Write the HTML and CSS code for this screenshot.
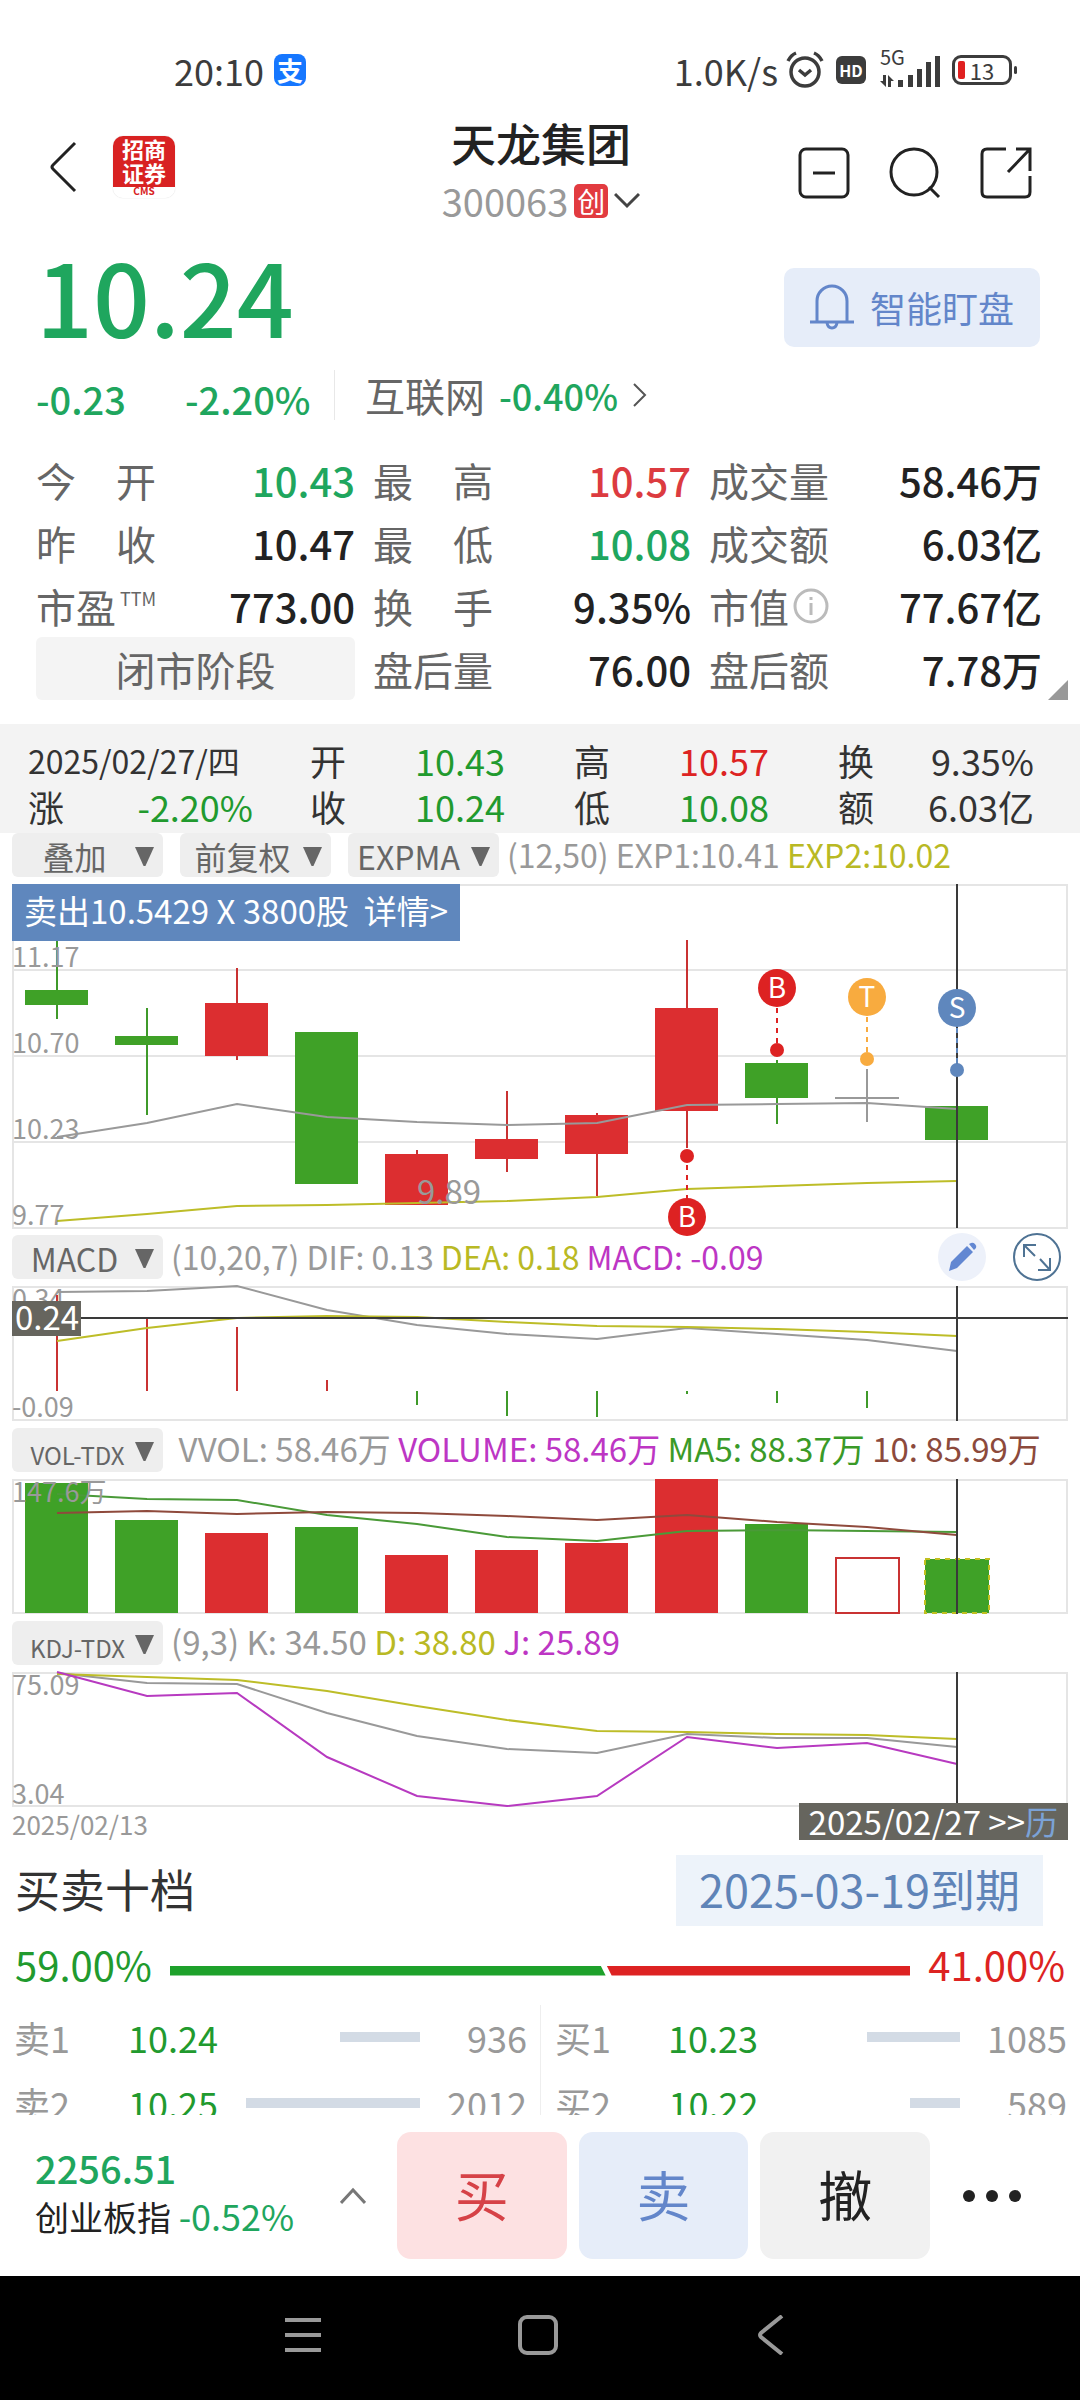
FILE: index.html
```html
<!DOCTYPE html>
<html lang="zh-CN">
<head>
    <meta charset="UTF-8">
    <meta name="viewport" content="width=device-width, initial-scale=1.0">
    <title>天龙集团 300063</title>
    <link rel="stylesheet" href="styles.css">
</head>
<body>
    <div class="app">
        <div class="status-bar">
            <div class="status-left">
                <span>20:10</span>
                <span class="pay-icon">支</span>
            </div>
            <div class="status-right">
                <span>1.0K/s</span>
                <svg width="38" height="38" viewBox="0 0 38 38" fill="none" stroke="#3c3c3c" stroke-width="3.5">
                    <circle cx="19" cy="21" r="14"/>
                    <path d="M13 19l6 5 6-5M2 10q3-6 8-8M36 10q-3-6-8-8"/>
                </svg>
                <span class="hd-icon">HD</span>
                <span class="signal">
                    <span class="net">5G</span>
                    <svg width="60" height="34" viewBox="0 0 60 34" fill="#3c3c3c">
                        <path d="M3 22h3v12L0 28h3zM8 34V22l6 6h-3v6z"/>
                        <rect x="18" y="27" width="5" height="7"/>
                        <rect x="28" y="22" width="5" height="12"/>
                        <rect x="37" y="16" width="5" height="18"/>
                        <rect x="46" y="9" width="5" height="25"/>
                        <rect x="55" y="3" width="5" height="31"/>
                    </svg>
                </span>
                <span class="battery">13</span>
            </div>
        </div>

        <header class="header">
            <div class="header-side header-home">
                <button class="icon-btn" aria-label="返回">
                    <svg width="28" height="52" viewBox="0 0 28 52" fill="none" stroke="#222" stroke-width="3">
                        <path d="M25 2L3 24q-2 2 0 4l22 22"/>
                    </svg>
                </button>
                <div class="logo">
                    <span>招商</span>
                    <span>证券</span>
                    <small>CMS</small>
                </div>
            </div>
            <div class="header-title">
                <h1>天龙集团</h1>
                <button class="code">300063<span class="board">创</span>
                    <svg width="26" height="18" viewBox="0 0 26 18" fill="none" stroke="#444" stroke-width="3">
                        <path d="M1 2l12 12L25 2"/>
                    </svg>
                </button>
            </div>
            <div class="header-side header-actions">
                <button class="icon-btn" aria-label="移除自选">
                    <svg width="52" height="52" viewBox="0 0 52 52" fill="none" stroke="#222" stroke-width="3">
                        <rect x="2" y="2" width="48" height="48" rx="6"/>
                        <path d="M15 26h22"/>
                    </svg>
                </button>
                <button class="icon-btn" aria-label="搜索">
                    <svg width="52" height="52" viewBox="0 0 52 52" fill="none" stroke="#222" stroke-width="3">
                        <circle cx="25" cy="25" r="23"/>
                        <path d="M40 40l10 10"/>
                    </svg>
                </button>
                <button class="icon-btn" aria-label="分享">
                    <svg width="52" height="52" viewBox="0 0 52 52" fill="none" stroke="#222" stroke-width="3">
                        <path d="M26 2H7Q2 2 2 7v38q0 5 5 5h38q5 0 5-5V29M36 2h14v22M50 2L28 25"/>
                    </svg>
                </button>
            </div>
        </header>

        <main class="content">
            <section class="price-row">
                <strong class="price green">10.24</strong>
                <button class="watch-btn">
                    <svg width="44" height="46" viewBox="0 0 44 46" fill="none" stroke="#6386ca" stroke-width="3">
                        <path d="M7 38V17a15 15 0 0 1 30 0v21M0 38h44M17 39q1 5 5 5t5-5"/>
                    </svg>
                    智能盯盘
                </button>
            </section>

            <section class="change-row">
                <span class="change green">-0.23</span>
                <span class="change-rate green">-2.20%</span>
                <a class="sector" href="#">互联网 <b class="green">-0.40%</b>
                    <svg width="16" height="24" viewBox="0 0 16 24" fill="none" stroke="#555" stroke-width="2">
                        <path d="M2 1l11 11L2 23"/>
                    </svg>
                </a>
            </section>

            <section class="quote">
                <dl>
                    <div><dt class="spread"><i>今</i><i>开</i></dt><dd class="green">10.43</dd></div>
                    <div><dt class="spread"><i>昨</i><i>收</i></dt><dd>10.47</dd></div>
                    <div><dt>市盈<sup>TTM</sup></dt><dd>773.00</dd></div>
                    <div class="phase">闭市阶段</div>
                </dl>
                <dl>
                    <div><dt class="spread"><i>最</i><i>高</i></dt><dd class="red">10.57</dd></div>
                    <div><dt class="spread"><i>最</i><i>低</i></dt><dd class="green">10.08</dd></div>
                    <div><dt class="spread"><i>换</i><i>手</i></dt><dd>9.35%</dd></div>
                    <div><dt>盘后量</dt><dd>76.00</dd></div>
                </dl>
                <dl>
                    <div><dt>成交量</dt><dd>58.46万</dd></div>
                    <div><dt>成交额</dt><dd>6.03亿</dd></div>
                    <div><dt>市值
                        <svg width="36" height="36" viewBox="0 0 36 36" fill="none" stroke="#bbb" stroke-width="3">
                            <circle cx="18" cy="18" r="16"/>
                            <path d="M18 15v12M18 9v3"/>
                        </svg></dt><dd>77.67亿</dd></div>
                    <div><dt>盘后额</dt><dd>7.78万</dd></div>
                </dl>
                <span class="corner"></span>
            </section>

            <section class="day-bar">
                <dl>
                    <div><dt class="date">2025/02/27/四</dt></div>
                    <div><dt>涨</dt><dd class="dgreen">-2.20%</dd></div>
                </dl>
                <dl>
                    <div><dt>开</dt><dd class="dgreen">10.43</dd></div>
                    <div><dt>收</dt><dd class="dgreen">10.24</dd></div>
                </dl>
                <dl>
                    <div><dt>高</dt><dd class="dred">10.57</dd></div>
                    <div><dt>低</dt><dd class="dgreen">10.08</dd></div>
                </dl>
                <dl>
                    <div><dt>换</dt><dd>9.35%</dd></div>
                    <div><dt>额</dt><dd>6.03亿</dd></div>
                </dl>
            </section>

            <section class="charts">
                <div class="tools">
                    <label class="pick"><select aria-label="叠加"><option>叠加</option></select></label>
                    <label class="pick"><select aria-label="复权"><option>前复权</option></select></label>
                    <label class="pick tight"><select aria-label="主图指标"><option>EXPMA</option></select></label>
                    <p class="legend">(12,50) EXP1:10.41 <span class="yellow">EXP2:10.02</span></p>
                </div>
                <div class="chart">
                    <svg viewBox="0 0 1056 344">
                        <path class="grid" d="M0 1H1055V344H1V0M0 86H1056M0 172H1056M0 258H1056"/>
                        <g class="up">
                            <path d="M225 84V176M405 266V321M495 207V288M585 229V312M675 56V264"/>
                            <rect x="193" y="119" width="63" height="53"/>
                            <rect x="373" y="270" width="63" height="51"/>
                            <rect x="463" y="255" width="63" height="20"/>
                            <rect x="553" y="231" width="63" height="39"/>
                            <rect x="643" y="124" width="63" height="103"/>
                        </g>
                        <g class="down">
                            <path d="M45 56V135M135 124V231M765 176V240M945 196V286"/>
                            <rect x="13" y="106" width="63" height="15"/>
                            <rect x="103" y="152" width="63" height="9"/>
                            <rect x="283" y="148" width="63" height="152"/>
                            <rect x="733" y="179" width="63" height="35"/>
                            <rect x="913" y="222" width="63" height="34"/>
                        </g>
                        <path class="flat" d="M855 185V238M823 214H887"/>
                        <polyline class="line-gray" points="45,253 135,239 225,220 315,233 405,238 495,241 585,239 675,221 765,220 855,219 945,225"/>
                        <polyline class="line-yellow" points="45,337 135,330 225,322 315,321 405,319 495,317 585,313 675,305 765,302 855,299 945,297"/>
                        <path class="cross" d="M945 0V344"/>
                        <g class="axis">
                            <text x="0" y="83">11.17</text>
                            <text x="0" y="169">10.70</text>
                            <text x="0" y="255">10.23</text>
                            <text x="0" y="341">9.77</text>
                            <text class="low" x="405" y="320">9.89</text>
                        </g>
                        <g class="mark buy">
                            <path d="M675 281V315"/>
                            <circle cx="675" cy="272" r="7"/>
                            <circle cx="675" cy="333" r="19"/>
                            <text x="675" y="343">B</text>
                        </g>
                        <g class="mark buy">
                            <path d="M765 124V162"/>
                            <circle cx="765" cy="166" r="7"/>
                            <circle cx="765" cy="104" r="19"/>
                            <text x="765" y="114">B</text>
                        </g>
                        <g class="mark both">
                            <path d="M855 133V171"/>
                            <circle cx="855" cy="175" r="7"/>
                            <circle cx="855" cy="113" r="19"/>
                            <text x="855" y="123">T</text>
                        </g>
                        <g class="mark sell">
                            <path d="M945 144V182"/>
                            <circle cx="945" cy="186" r="7"/>
                            <circle cx="945" cy="124" r="19"/>
                            <text x="945" y="134">S</text>
                        </g>
                    </svg>
                    <button class="deal">卖出10.5429 X 3800股 &nbsp;详情&gt;</button>
                </div>

                <div class="tools">
                    <label class="pick"><select aria-label="副图一"><option>MACD</option></select></label>
                    <p class="legend">(10,20,7) DIF: 0.13 <span class="yellow">DEA: 0.18</span> <span class="purple">MACD: -0.09</span></p>
                    <div class="chart-actions">
                        <button class="icon-btn" aria-label="画线">
                            <svg width="48" height="48" viewBox="0 0 48 48">
                                <circle cx="24" cy="24" r="24" fill="#edf1fa"/>
                                <path fill="#6287d2" d="M11 38l2-9L29 13l6 6-16 16zM31 11l2-1q2-1 4 1t1 4l-2 2z"/>
                            </svg>
                        </button>
                        <button class="icon-btn" aria-label="全屏">
                            <svg width="48" height="48" viewBox="0 0 48 48" fill="none" stroke="#4f7394" stroke-width="2">
                                <circle cx="24" cy="24" r="23"/>
                                <path d="M11 24V12h12M11 12l11 11M37 25v12H25M37 37L27 26"/>
                            </svg>
                        </button>
                    </div>
                </div>
                <div class="chart">
                    <svg viewBox="0 0 1056 135">
                        <path class="grid" d="M0 1H1055V134H1V0"/>
                        <text class="axis" x="0" y="23">0.34</text>
                        <text class="axis" x="0" y="131">-0.09</text>
                        <path class="up" d="M45 9V105M135 31V105M225 41V105M315 94V105"/>
                        <path class="down" d="M405 105V119M495 105V130M585 105V131M675 105V108M765 105V117M855 105V122M945 105V134"/>
                        <polyline class="line-gray" points="45,6 135,5 225,0 315,24 405,39 495,48 585,53 675,42 765,48 855,54 945,65"/>
                        <polyline class="line-yellow" points="45,55 135,42 225,32 315,30 405,31 495,36 585,40 675,41 765,43 855,46 945,50"/>
                        <path class="cross" d="M945 0V135M0 32H1056"/>
                        <rect class="tag" x="0" y="15" width="69" height="35"/>
                        <text class="tag-text" x="3" y="44">0.24</text>
                    </svg>
                </div>

                <div class="tools">
                    <label class="pick small"><select aria-label="副图二"><option>VOL-TDX</option></select></label>
                    <p class="legend wide">&nbsp;VVOL: 58.46万 <span class="purple">VOLUME: 58.46万</span> <span class="ma5">MA5: 88.37万</span> <span class="ma10">10: 85.99万</span></p>
                </div>
                <div class="chart">
                    <svg viewBox="0 0 1056 135">
                        <path class="grid" d="M0 1H1055V134H1V0"/>
                        <g class="down">
                            <rect x="13" y="4" width="63" height="130"/>
                            <rect x="103" y="41" width="63" height="93"/>
                            <rect x="283" y="48" width="63" height="86"/>
                            <rect x="733" y="45" width="63" height="89"/>
                            <rect class="today" x="913" y="80" width="64" height="54"/>
                        </g>
                        <g class="up">
                            <rect x="193" y="54" width="63" height="80"/>
                            <rect x="373" y="76" width="63" height="58"/>
                            <rect x="463" y="71" width="63" height="63"/>
                            <rect x="553" y="64" width="63" height="70"/>
                            <rect x="643" y="0" width="63" height="134"/>
                            <rect class="hollow" x="824" y="79" width="63" height="55"/>
                        </g>
                        <polyline class="line-ma5" points="45,15 135,20 225,21 315,36 405,45 495,58 585,62 675,52 765,51 855,52 945,53"/>
                        <polyline class="line-ma10" points="45,34 135,32 225,35 315,33 405,34 495,37 585,41 675,36 765,43 855,48 945,56"/>
                        <text class="axis" x="0" y="23">147.6万</text>
                        <path class="cross" d="M945 0V135"/>
                    </svg>
                </div>

                <div class="tools">
                    <label class="pick small"><select aria-label="副图三"><option>KDJ-TDX</option></select></label>
                    <p class="legend wide">(9,3) K: 34.50 <span class="yellow">D: 38.80</span> <span class="purple">J: 25.89</span></p>
                </div>
                <div class="chart">
                    <svg viewBox="0 0 1056 135">
                        <path class="grid" d="M0 1H1055V134H1V0"/>
                        <text class="axis" x="0" y="23">75.09</text>
                        <text class="axis" x="0" y="132">3.04</text>
                        <polyline class="line-gray" points="45,1 135,11 225,12 315,41 405,64 495,77 585,81 675,62 765,66 855,66 945,75"/>
                        <polyline class="line-yellow" points="45,2 135,5 225,8 315,19 405,34 495,48 585,59 675,60 765,62 855,63 945,67"/>
                        <polyline class="line-purple" points="45,0 135,24 225,21 315,85 405,124 495,134 585,124 675,65 765,76 855,71 945,92"/>
                        <path class="cross" d="M945 0V135"/>
                    </svg>
                </div>
                <div class="dates">
                    <span>2025/02/13</span>
                    <button class="date-now">2025/02/27 &gt;&gt;<em>历</em></button>
                </div>
            </section>

            <section class="book">
                <div class="book-head">
                    <h2>买卖十档</h2>
                    <button class="expire">2025-03-19到期</button>
                </div>
                <div class="ratio">
                    <span class="dgreen">59.00%</span>
                    <div class="ratio-bar">
                        <i class="ratio-sell" style="flex-grow: 59"></i>
                        <i class="ratio-buy" style="flex-grow: 41"></i>
                    </div>
                    <span class="dred">41.00%</span>
                </div>
                <div class="orders">
                    <table>
                        <tr><th>卖1</th><td class="p">10.24</td><td class="b"><i style="width: 80px"></i></td><td class="n">936</td></tr>
                        <tr><th>卖2</th><td class="p">10.25</td><td class="b"><i style="width: 174px"></i></td><td class="n">2012</td></tr>
                    </table>
                    <table>
                        <tr><th>买1</th><td class="p">10.23</td><td class="b"><i style="width: 93px"></i></td><td class="n">1085</td></tr>
                        <tr><th>买2</th><td class="p">10.22</td><td class="b"><i style="width: 50px"></i></td><td class="n">589</td></tr>
                    </table>
                </div>
            </section>
        </main>

        <footer class="trade-bar">
            <a class="index" href="#">
                <b class="green">2256.51</b>
                <span>创业板指 <em class="green">-0.52%</em></span>
            </a>
            <svg class="index-arrow" width="26" height="18" viewBox="0 0 26 18" fill="none" stroke="#777" stroke-width="3">
                <path d="M1 16L13 3l12 13"/>
            </svg>
            <button class="trade buy-btn">买</button>
            <button class="trade sell-btn">卖</button>
            <button class="trade cancel-btn">撤</button>
            <button class="icon-btn more" aria-label="更多">
                <svg width="60" height="14" viewBox="0 0 60 14" fill="#222">
                    <circle cx="7" cy="7" r="6"/>
                    <circle cx="30" cy="7" r="6"/>
                    <circle cx="53" cy="7" r="6"/>
                </svg>
            </button>
        </footer>

        <nav class="sys-nav">
            <button class="icon-btn" aria-label="菜单">
                <svg width="40" height="40" viewBox="0 0 40 40" fill="none" stroke="#999" stroke-width="4">
                    <path d="M2 5h36M2 20h36M2 35h36"/>
                </svg>
            </button>
            <button class="icon-btn" aria-label="主页">
                <svg width="40" height="40" viewBox="0 0 40 40" fill="none" stroke="#999" stroke-width="4">
                    <rect x="2" y="2" width="36" height="36" rx="7"/>
                </svg>
            </button>
            <button class="icon-btn" aria-label="后退">
                <svg width="40" height="40" viewBox="0 0 40 40" fill="none" stroke="#999" stroke-width="4">
                    <path d="M30 1L9 18q-2 2 0 4l21 17"/>
                </svg>
            </button>
        </nav>
    </div>
</body>
</html>
```
FILE: styles.css
```css
* {
    box-sizing: border-box;
}

body {
    margin: 0;
    background-color: #fff;
    color: #222;
    font-family: "Noto Sans CJK SC", sans-serif;
    font-size: 40px;
    line-height: 1;
}

h1, h2, p, dl, dd {
    margin: 0;
}

i, em {
    font-style: normal;
}

svg {
    display: block;
    flex: none;
}

button, select {
    border: none;
    padding: 0;
    background: none;
    color: inherit;
    font: inherit;
    cursor: pointer;
}

a {
    color: inherit;
    text-decoration: none;
}

.app {
    display: flex;
    flex-direction: column;
    height: 100vh;
}

.green { color: #1fa65e; }
.red { color: #dc3b40; }
.dgreen { color: #219a2e; }
.dred { color: #dd2322; }
.yellow { color: #b9b924; }
.purple { color: #bd36c4; }
.ma5 { color: #3a9a28; }
.ma10 { color: #8c4a3c; }

/* status bar */
.status-bar {
    display: flex;
    justify-content: space-between;
    height: 108px;
    padding: 34px 68px 0 174px;
    color: #3c3c3c;
    font-size: 36px;
}

.status-left, .status-right {
    display: flex;
    align-items: center;
    gap: 10px;
    height: 72px;
}

.status-right {
    gap: 8px;
}

.pay-icon {
    width: 32px;
    border-radius: 8px;
    background-color: #1677ff;
    color: #fff;
    font-size: 26px;
    font-weight: 700;
    line-height: 32px;
    text-align: center;
}

.hd-icon {
    width: 30px;
    border-radius: 6px;
    margin-left: 4px;
    background-color: #3c3c3c;
    color: #fff;
    font-size: 16px;
    font-weight: 700;
    line-height: 28px;
    text-align: center;
}

.signal {
    position: relative;
    margin-left: 6px;
}

.net {
    position: absolute;
    top: -6px;
    left: 0;
    font-size: 20px;
}

.battery {
    position: relative;
    width: 60px;
    border: 3px solid #3c3c3c;
    border-radius: 9px;
    margin-left: 4px;
    font-size: 22px;
    line-height: 24px;
    text-align: center;
}

.battery::before, .battery::after {
    content: "";
    position: absolute;
    top: 3px;
    left: 3px;
    width: 7px;
    height: 18px;
    border-radius: 2px;
    background-color: #e02020;
}

.battery::after {
    top: 8px;
    left: 59px;
    width: 3px;
    height: 8px;
    background-color: #3c3c3c;
}

/* header */
.header {
    display: flex;
    align-items: center;
    height: 130px;
    padding: 0 48px 0 50px;
}

.header-side {
    display: flex;
    flex: 1;
    align-items: center;
    gap: 35px;
}

.header-home {
    padding-bottom: 12px;
}

.header-actions {
    justify-content: flex-end;
    gap: 39px;
}

.logo {
    width: 62px;
    height: 62px;
    border-radius: 10px;
    background: linear-gradient(#d82222 51px, #fff 51px);
    box-shadow: 0 0 1px #bbb;
    color: #fff;
    font-size: 22px;
    font-weight: 700;
    line-height: 24px;
    text-align: center;
}

.logo span, .logo small {
    display: block;
}

.logo small {
    color: #d82222;
    font-size: 10px;
    line-height: 14px;
}

.header-title {
    display: flex;
    flex-direction: column;
    align-items: center;
    gap: 18px;
    padding-bottom: 8px;
}

h1 {
    font-size: 45px;
    font-weight: 500;
}

.code {
    display: flex;
    align-items: center;
    gap: 6px;
    color: #999;
    font-size: 38px;
    line-height: 36px;
}

.board {
    width: 34px;
    border-radius: 5px;
    background-color: #e23b40;
    color: #fff;
    font-size: 28px;
    line-height: 34px;
}

/* quote */
.content {
    flex: 1;
    min-height: 0;
    overflow: hidden;
}

.price-row {
    display: flex;
    align-items: center;
    justify-content: space-between;
    height: 130px;
    padding: 8px 40px 0 36px;
}

.price {
    padding-bottom: 24px;
    font-size: 100px;
    font-weight: 500;
}

.watch-btn {
    display: flex;
    align-items: center;
    justify-content: center;
    gap: 16px;
    width: 256px;
    height: 79px;
    border-radius: 10px;
    background-color: #e6edf9;
    color: #6386ca;
    font-size: 36px;
}

.change-row {
    display: flex;
    align-items: center;
    height: 54px;
    padding-left: 36px;
    font-size: 38px;
    font-weight: 500;
}

.change, .change-rate {
    width: 149px;
    padding-top: 8px;
}

.sector {
    display: flex;
    align-items: center;
    gap: 14px;
    height: 50px;
    padding-left: 30px;
    border-left: 1px solid #e8e8e8;
    color: #666;
    font-size: 40px;
    font-weight: 400;
}

.sector b {
    font-size: 36px;
    font-weight: 500;
}

.quote {
    position: relative;
    display: grid;
    grid-template-columns: 319fr 318fr 333fr;
    column-gap: 18px;
    padding: 26px 38px 24px 36px;
}

.quote dl > div {
    display: flex;
    align-items: center;
    justify-content: space-between;
    height: 63px;
}

.quote dt {
    display: flex;
    align-items: center;
    gap: 4px;
    color: #666;
}

.quote .spread {
    justify-content: space-between;
    width: 120px;
}

.quote dd {
    font-weight: 500;
}

.quote sup {
    align-self: flex-start;
    font-size: 18px;
    line-height: 24px;
}

.quote .phase {
    justify-content: center;
    border-radius: 6px;
    background-color: #f4f4f4;
    color: #666;
}

.corner {
    position: absolute;
    right: 12px;
    bottom: 24px;
    width: 20px;
    height: 20px;
    background-color: #999;
    clip-path: polygon(100% 0, 100% 100%, 0 100%);
}

/* selected day */
.day-bar {
    display: grid;
    grid-template-columns: 225fr 195fr 207fr 208fr;
    column-gap: 57px;
    padding: 13px 46px 4px 28px;
    background-color: #f3f3f3;
    color: #333;
    font-size: 36px;
}

.day-bar dl:nth-child(n+3) {
    padding-left: 12px;
}

.day-bar dl > div {
    display: flex;
    align-items: center;
    justify-content: space-between;
    height: 46px;
}

.day-bar .date {
    font-size: 32px;
    white-space: nowrap;
}

/* charts */
.charts {
    padding: 0 12px;
}

.tools {
    display: flex;
    align-items: center;
    height: 44px;
    margin: 7px 0;
    white-space: nowrap;
}

.tools:first-child {
    margin-top: 0;
}

.pick {
    position: relative;
    width: 151px;
    height: 44px;
    border-radius: 6px;
    margin-right: 17px;
    background-color: #eee;
}

.pick::after {
    content: "";
    position: absolute;
    top: 14px;
    right: 9px;
    width: 19px;
    height: 19px;
    background-color: #666;
    clip-path: polygon(0 0, 100% 0, 55% 100%, 45% 100%);
    pointer-events: none;
}

.pick select {
    appearance: none;
    width: 100%;
    height: 44px;
    padding-right: 26px;
    color: #666;
    font-size: 32px;
    line-height: 40px;
    text-align: center;
    text-align-last: center;
}

.pick.tight select {
    padding-right: 30px;
}

.pick.small select {
    padding-right: 20px;
    font-size: 24px;
}

.pick:has(+ .legend) {
    margin-right: 8px;
}

.legend {
    padding-bottom: 3px;
    color: #999;
    font-size: 32px;
}

.legend.wide {
    font-size: 33px;
}

.chart-actions {
    display: flex;
    gap: 27px;
    margin-left: auto;
    margin-right: 7px;
}

.chart {
    position: relative;
}

.chart svg {
    width: 100%;
    overflow: visible;
}

.deal {
    position: absolute;
    top: 0;
    left: 0;
    height: 57px;
    padding: 0 12px 4px;
    background-color: #5f87bd;
    color: #fff;
    font-size: 33px;
}

.grid {
    fill: none;
    stroke: #e5e5e5;
    stroke-width: 2;
}

.up { fill: #dc2e30; stroke: #c93232; stroke-width: 2; }
.down { fill: #3fa127; stroke: #3f9a2a; stroke-width: 2; }
.up rect, .down rect { stroke: none; }
.flat { stroke: #999; stroke-width: 2; }
.cross { stroke: #3a3a3a; stroke-width: 2; }

.up .hollow {
    fill: #fff;
    stroke: #c93232;
    stroke-width: 2;
}

.down .today {
    stroke: #c0c020;
    stroke-width: 2;
    stroke-dasharray: 5 5;
}

.line-gray, .line-yellow, .line-purple, .line-ma5, .line-ma10 {
    fill: none;
    stroke: #999;
    stroke-width: 2;
}

.line-yellow { stroke: #bdbd28; }
.line-purple { stroke: #b73ac0; }
.line-ma5 { stroke: #4a9a38; }
.line-ma10 { stroke: #8f4a3c; }

.axis {
    fill: #999;
    font-size: 27px;
}

.axis .low {
    font-size: 33px;
}

.mark path {
    stroke-width: 2;
    stroke-dasharray: 5 5;
}

.mark text {
    fill: #fff;
    stroke: none;
    font-size: 28px;
    text-anchor: middle;
}

.buy { fill: #dd2222; stroke: #dd2222; }
.both { fill: #f8ab3f; stroke: #f8ab3f; }
.sell { fill: #5f87bd; stroke: #5f87bd; }
.mark circle { stroke: none; }

.tag { fill: #66655e; }

.tag-text {
    fill: #fff;
    font-size: 33px;
}

.dates {
    display: flex;
    justify-content: space-between;
    color: #999;
    font-size: 26px;
    line-height: 33px;
}

.date-now {
    position: relative;
    height: 37px;
    margin-top: -4px;
    padding: 0 10px;
    background-color: #66655e;
    color: #fff;
    font-size: 33px;
    line-height: 37px;
}

.date-now em {
    color: #7ba2d6;
}

/* order book */
.book {
    color: #333;
}

.book-head {
    display: flex;
    align-items: center;
    justify-content: space-between;
    padding: 15px 37px 0 15px;
}

h2 {
    padding-bottom: 4px;
    font-size: 45px;
    font-weight: 400;
}

.expire {
    width: 367px;
    height: 71px;
    padding-bottom: 4px;
    background-color: #edf3fa;
    color: #5f84b8;
    font-size: 45px;
}

.ratio {
    display: flex;
    align-items: center;
    gap: 18px;
    height: 79px;
    padding: 0 15px;
}

.ratio span {
    padding-bottom: 3px;
}

.ratio-bar {
    display: flex;
    flex: 1;
    height: 10px;
    margin-top: 10px;
}

.ratio-sell, .ratio-buy {
    flex-basis: 0;
    background-color: #1ea12b;
    clip-path: polygon(0 0, calc(100% - 6px) 0, calc(100% - 1px) 100%, 0 100%);
}

.ratio-buy {
    background-color: #dd2222;
    clip-path: polygon(0 0, 100% 0, 100% 100%, 5px 100%);
}

.orders {
    display: grid;
    grid-template-columns: 1fr 1fr;
}

.orders table {
    border-collapse: collapse;
    table-layout: fixed;
    width: 100%;
}

.orders table + table {
    border-left: 1px solid #eee;
}

.orders tr {
    height: 66px;
}

.orders th, .orders td {
    padding: 0 0 2px;
    color: #999;
    font-size: 36px;
    font-weight: 400;
    text-align: right;
}

.orders th {
    width: 122px;
    padding-left: 14px;
    text-align: left;
}

.orders .p {
    width: 96px;
    color: #219a2e;
}

.orders .b i {
    display: block;
    height: 10px;
    margin-left: auto;
    background-color: #d3dbe5;
}

.orders .n {
    width: 120px;
    padding-right: 13px;
}

/* trade bar */
.trade-bar {
    display: flex;
    align-items: center;
    gap: 12px;
    height: 161px;
    padding: 0 58px 0 35px;
    background-color: #fff;
}

.index {
    display: flex;
    flex-direction: column;
    gap: 10px;
    width: 293px;
    padding-bottom: 8px;
    font-size: 34px;
    white-space: nowrap;
}

.index b {
    font-size: 38px;
    font-weight: 500;
}

.index em {
    font-size: 36px;
}

.index-arrow {
    margin-right: 19px;
}

.trade {
    flex: 1;
    height: 127px;
    padding-bottom: 4px;
    border-radius: 14px;
    font-size: 54px;
}

.buy-btn {
    background-color: #fde1e2;
    color: #d64247;
}

.sell-btn {
    background-color: #e6edf9;
    color: #6386ca;
}

.cancel-btn {
    background-color: #f1f1f1;
}

.more {
    margin-left: 20px;
}

/* system navigation */
.sys-nav {
    display: flex;
    justify-content: space-between;
    height: 124px;
    padding: 39px 288px 0 283px;
    background-color: #000;
}

.sys-nav .icon-btn {
    height: 40px;
}
```
